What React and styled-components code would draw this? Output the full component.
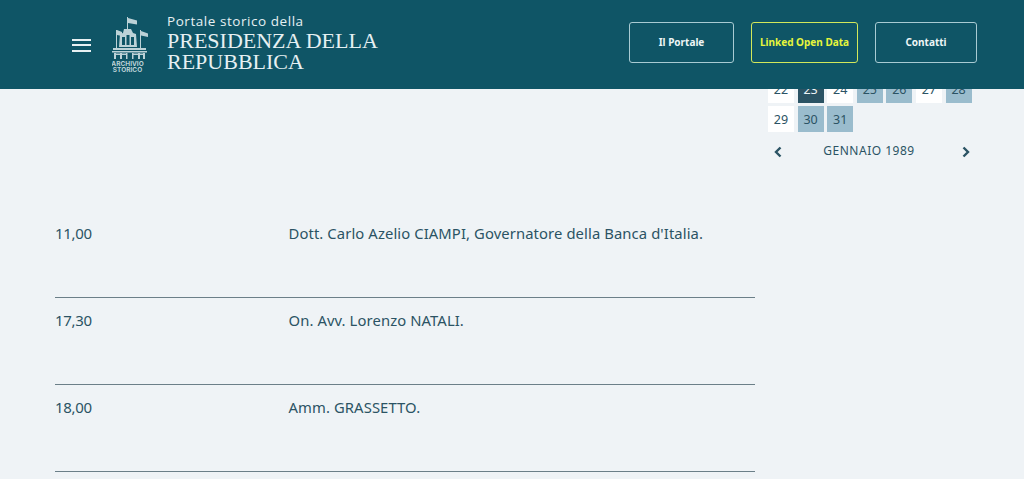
import React from 'react';
import styled, { createGlobalStyle } from 'styled-components';

const GlobalStyle = createGlobalStyle`
  html, body {
    margin: 0;
    padding: 0;
    height: 479px;
    overflow: hidden;
    background: #eff3f6;
    font-family: "Noto Sans", "Liberation Sans", sans-serif;
    color: #2b5364;
  }
`;

const Header = styled.header`
  position: fixed;
  top: 0;
  left: 0;
  right: 0;
  height: 89px;
  box-sizing: border-box;
  padding: 0 47px 0 72px;
  display: flex;
  align-items: center;
  justify-content: space-between;
  background: #0f5566;
  z-index: 10;
`;

const Brand = styled.div`
  display: flex;
  align-items: center;
`;

const Burger = styled.button`
  width: 19px;
  height: 13px;
  padding: 0;
  margin: 1px 21px 0 0;
  border: 0;
  background: none;
  display: flex;
  flex-direction: column;
  justify-content: space-between;
  span {
    display: block;
    height: 2px;
    background: #e8f1f3;
  }
`;

const BrandText = styled.div`
  margin: 0 0 5px 19px;
  color: #e6f0f2;
`;

const Overline = styled.div`
  font-family: "Open Sans", sans-serif;
  font-size: 13.5px;
  line-height: 18px;
  letter-spacing: 0.55px;
`;

const Title = styled.div`
  font-family: "Liberation Serif", serif;
  font-size: 22px;
  line-height: 21px;
  white-space: nowrap;
`;

const Nav = styled.nav`
  display: flex;
  gap: 17px;
  margin-top: -5px;
`;

const NavButton = styled.a`
  box-sizing: border-box;
  width: ${(p) => p.$w}px;
  height: 41px;
  display: flex;
  align-items: center;
  justify-content: center;
  border: 1px solid ${(p) => (p.$accent ? '#d3e85a' : '#a9cbd3')};
  border-radius: 3px;
  color: ${(p) => (p.$accent ? '#e6f53c' : '#eef5f6')};
  font-size: 10px;
  font-weight: 700;
`;

const Main = styled.main`
  padding: 78px 52px 0 55px;
  display: flex;
  align-items: flex-start;
`;

const Agenda = styled.section`
  width: 700px;
  flex: none;
  padding-top: 133px;
`;

const Row = styled.div`
  height: 87px;
  box-sizing: border-box;
  padding-top: 11px;
  display: flex;
  font-size: 14.8px;
  line-height: 22px;
  letter-spacing: 0.1px;
  border-bottom: 1px solid #6b7f88;
`;

const Time = styled.div`
  width: 233.5px;
  flex: none;
  font-size: 15px;
  letter-spacing: -0.3px;
`;

const Calendar = styled.aside`
  margin: -1.5px 0 0 13px;
  width: 204px;
`;

const Days = styled.div`
  display: grid;
  grid-template-columns: repeat(7, 26px);
  grid-auto-rows: 26px;
  gap: 3.6px;
`;

const Day = styled.div`
  display: flex;
  align-items: center;
  justify-content: center;
  font-size: 12.5px;
  background: ${(p) => (p.$kind === 'active' ? '#2b5364' : p.$kind === 'event' ? '#9abccd' : '#ffffff')};
  color: ${(p) => (p.$kind === 'active' ? '#eef2f6' : '#2b5364')};
`;

const Month = styled.div`
  margin-top: 9px;
  display: flex;
  align-items: center;
  justify-content: space-between;
  padding: 0 1px 0 5px;
  font-size: 12px;
  letter-spacing: 0.5px;
  line-height: 20px;
  span {
    padding-right: 6px;
  }
`;

const Arrow = styled.svg`
  width: 10px;
  height: 12px;
  margin-top: 2px;
  fill: none;
  stroke: #2b5364;
  stroke-width: 2.4;
`;

const days = [
  [22], [23, 'active'], [24], [25, 'event'], [26, 'event'], [27], [28, 'event'],
  [29], [30, 'event'], [31, 'event'],
];

const rows = [
  ['11,00', "Dott. Carlo Azelio CIAMPI, Governatore della Banca d'Italia."],
  ['17,30', 'On. Avv. Lorenzo NATALI.'],
  ['18,00', 'Amm. GRASSETTO.'],
];

function Logo() {
  return (
    <svg width="36" height="56" viewBox="0 0 36 56" fill="#bcd2d7">
      {/* flags */}
      <path d="M15 0h1v12h-1z" />
      <path d="M16 1l9 2.5v4l-9-1.5z" />
      <path d="M4 13h1v18H4zM28 13h1v18h-1z" />
      <path d="M5 13l5 2v4l-5-1z" />
      <path d="M29 14l7 2.5v3.5l-7-1.5z" />
      {/* tower with arches */}
      <path
        fillRule="evenodd"
        d="M12 12h7l2 4 3 1 1 13H7l1-13 3-1zM10 20v8h3v-8zM14.5 18v10h3v-10zM19 20v8h3v-8z"
      />
      {/* balustrade and lower arcade */}
      <path d="M1 31h33v2H1zM0 34h35v1.5H0z" />
      <path d="M2 36h2v6H2zM8 36h2v6H8zM14 36h1.5v6H14zM20 36h1.5v6H20zM26 36h2v6h-2zM31 36h2v6h-2z" />
      <path d="M4 36.5h4v1.5H4zM10 36.5h4v1.5h-4zM21 36.5h5v1.5h-5zM28 36.5h3v1.5h-3z" />
      <text x="15.5" y="48.5" textAnchor="middle" fontSize="6.5" fontWeight="700" fontFamily="Inter, sans-serif">ARCHIVIO</text>
      <text x="15.5" y="54.5" textAnchor="middle" fontSize="6.5" fontWeight="700" fontFamily="Inter, sans-serif">STORICO</text>
    </svg>
  );
}

export default function App() {
  return (
    <>
      <GlobalStyle />
      <Header>
        <Brand>
          <Burger aria-label="menu">
            <span />
            <span />
            <span />
          </Burger>
          <Logo />
          <BrandText>
            <Overline>Portale storico della</Overline>
            <Title>PRESIDENZA DELLA</Title>
            <Title>REPUBBLICA</Title>
          </BrandText>
        </Brand>
        <Nav>
          <NavButton $w={105}>Il Portale</NavButton>
          <NavButton $w={107} $accent>Linked Open Data</NavButton>
          <NavButton $w={102}>Contatti</NavButton>
        </Nav>
      </Header>
      <Main>
        <Agenda>
          {rows.map(([time, text]) => (
            <Row key={time}>
              <Time>{time}</Time>
              <div>{text}</div>
            </Row>
          ))}
        </Agenda>
        <Calendar>
          <Days>
            {days.map(([n, kind]) => (
              <Day key={n} $kind={kind}>{n}</Day>
            ))}
          </Days>
          <Month>
            <Arrow viewBox="0 0 10 12"><path d="M7.5 1.5L3 6l4.5 4.5" /></Arrow>
            <span>GENNAIO 1989</span>
            <Arrow viewBox="0 0 10 12"><path d="M2.5 1.5L7 6l-4.5 4.5" /></Arrow>
          </Month>
        </Calendar>
      </Main>
    </>
  );
}
